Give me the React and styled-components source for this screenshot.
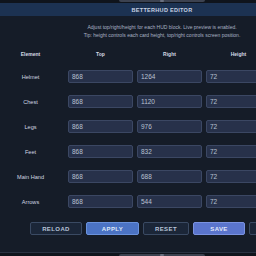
import { Fragment } from 'react';
import styled, { createGlobalStyle } from 'styled-components';

const GlobalStyle = createGlobalStyle`
  html, body {
    margin: 0;
    padding: 0;
    background: #0f141c;
    overflow: hidden;
  }
`;

const Page = styled.div`
  width: 256px;
  height: 256px;
  overflow: hidden;
  background: #0f141c;
  font-family: 'Liberation Sans', Arial, sans-serif;
`;

const Frame = styled.div`
  width: 336px;
  margin-left: -6px;
  display: flex;
  flex-direction: column;
`;

const TabStrip = styled.div`
  height: 3px;
  display: flex;
  justify-content: center;
  align-items: ${(p) => (p.$bottom ? 'flex-end' : 'flex-start')};
  background: #0f141c;
`;

const Tab = styled.div`
  width: 86px;
  height: 2px;
  background: #3c4250;
  border-radius: ${(p) => (p.$bottom ? '2px 2px 0 0' : '0 0 2px 2px')};
  display: flex;
  justify-content: center;
`;

const Notch = styled.div`
  width: 4px;
  height: 2px;
  background: #6a7080;
  border-radius: 1px;
`;

const Panel = styled.div`
  background: #151c28;
  border-bottom: 1px solid #2a3242;
  padding-bottom: 17px;
`;

const Header = styled.div`
  height: 13px;
  background: #1c3252;
  display: flex;
  align-items: center;
  justify-content: center;
  color: #c9d3e3;
  font-size: 5.5px;
  font-weight: 700;
  letter-spacing: 0.3px;
`;

const Desc = styled.div`
  margin-top: 7px;
  text-align: center;
  color: #a9b2c4;
  font-size: 5px;
  line-height: 8px;
`;

const Table = styled.div`
  margin-top: 5px;
  padding-left: 3px;
  display: grid;
  grid-template-columns: 67px 65px 65px 65px;
  column-gap: 4px;
`;

const HeadCell = styled.div`
  height: 20px;
  display: flex;
  align-items: center;
  justify-content: center;
  color: #d5dbe6;
  font-size: 5px;
  font-weight: 700;
`;

const Label = styled.div`
  height: 25px;
  display: flex;
  align-items: center;
  justify-content: center;
  color: #d0d6e0;
  font-size: 5.6px;
`;

const Cell = styled.div`
  height: 25px;
  display: flex;
  align-items: center;
`;

const Field = styled.div`
  width: 100%;
  height: 13px;
  box-sizing: border-box;
  background: #27314a;
  border: 1px solid #3b4763;
  border-radius: 2px;
  padding-left: 3px;
  display: flex;
  align-items: center;
  color: #b9c1d1;
  font-size: 6.5px;
`;

const ButtonRow = styled.div`
  margin-top: 8px;
  display: flex;
  justify-content: center;
  gap: 4px;
`;

const Button = styled.div`
  width: ${(p) => p.$w}px;
  height: 13px;
  box-sizing: border-box;
  border-radius: 2px;
  display: flex;
  align-items: center;
  justify-content: center;
  font-size: 6px;
  font-weight: 700;
  letter-spacing: 0.4px;
  background: ${(p) => p.$bg || '#1b2638'};
  border: 1px solid ${(p) => p.$border || '#3a4a63'};
  color: ${(p) => p.$color || '#b8c4d8'};
`;

const rows = [
  ['Helmet', 868, 1264, 72],
  ['Chest', 868, 1120, 72],
  ['Legs', 868, 976, 72],
  ['Feet', 868, 832, 72],
  ['Main Hand', 868, 688, 72],
  ['Arrows', 868, 544, 72],
];

export default function App() {
  return (
    <Page>
      <GlobalStyle />
      <Frame>
        <TabStrip>
          <Tab>
            <Notch />
          </Tab>
        </TabStrip>
        <Panel>
          <Header>BETTERHUD EDITOR</Header>
          <Desc>
            <div>Adjust top/right/height for each HUD block. Live preview is enabled.</div>
            <div>Tip: height controls each card height, top/right controls screen position.</div>
          </Desc>
          <Table>
            <HeadCell>Element</HeadCell>
            <HeadCell>Top</HeadCell>
            <HeadCell>Right</HeadCell>
            <HeadCell>Height</HeadCell>
            {rows.map(([name, top, right, height]) => (
              <Fragment key={name}>
                <Label>{name}</Label>
                <Cell>
                  <Field>{top}</Field>
                </Cell>
                <Cell>
                  <Field>{right}</Field>
                </Cell>
                <Cell>
                  <Field>{height}</Field>
                </Cell>
              </Fragment>
            ))}
          </Table>
          <ButtonRow>
            <Button $w={52}>RELOAD</Button>
            <Button $w={53} $bg="#4b73c4" $border="#6a92dc" $color="#dfe8f8">
              APPLY
            </Button>
            <Button $w={46}>RESET</Button>
            <Button $w={52} $bg="#5a74cc" $border="#7a92e0" $color="#e2e8fa">
              SAVE
            </Button>
            <Button $w={45} />
          </ButtonRow>
        </Panel>
        <TabStrip $bottom>
          <Tab $bottom>
            <Notch />
          </Tab>
        </TabStrip>
      </Frame>
    </Page>
  );
}
